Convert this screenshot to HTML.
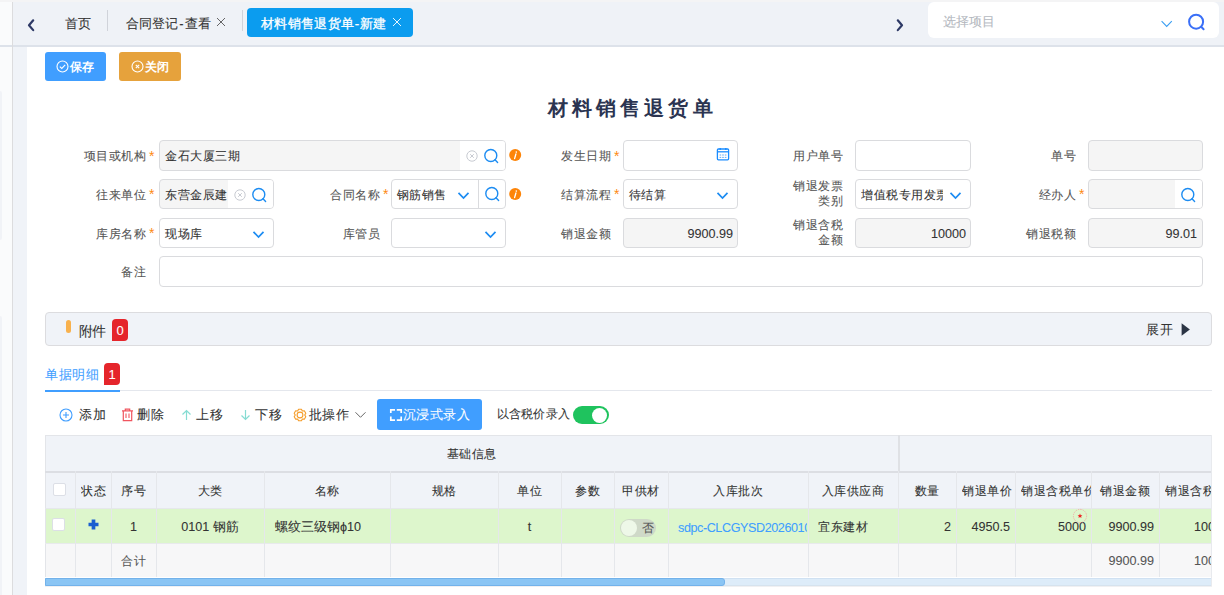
<!DOCTYPE html>
<html><head><meta charset="utf-8">
<style>
*{box-sizing:border-box;margin:0;padding:0}
html,body{width:1224px;height:595px;overflow:hidden;background:#fff;font-family:"Liberation Sans",sans-serif;color:#333;font-size:13px}
div,svg{position:absolute}
.t{white-space:nowrap;line-height:16px;-webkit-text-stroke:0.08px currentColor}
#topstrip{left:0;top:0;width:1224px;height:2px;background:#f4f4f5}
#leftbar{left:0;top:2px;width:12px;height:593px;background:#fafbfc}
#vline{left:12px;top:2px;width:1px;height:593px;background:#dcdcde}
#header{left:13px;top:2px;width:1211px;height:43px;background:#eff2f7}
#hline{left:0;top:45px;width:1224px;height:2px;background:#dde2ea}
#lstrip{left:13px;top:47px;width:14px;height:548px;background:#f0f3f8}
.tab{top:16px;font-size:13px;color:#333}
.sep{top:10px;width:1px;height:21px;background:#d0d3da}
.btn{top:52px;height:29px;border-radius:3px;color:#fff}
.lbl{font-size:12px;letter-spacing:0.5px;color:#555;text-align:right}
.req{color:#fd8a12;font-size:14px;-webkit-text-stroke:0}
.inp{height:30px;border:1px solid #dadbde;border-radius:4px;background:#fff;overflow:hidden}
.g{background:#f5f5f5}
.it{font-size:12px;letter-spacing:0.5px;color:#333}
.num{font-size:12.6px;color:#333}
.cell{font-size:12.6px;color:#333;text-align:center}
.tb{font-size:13px;letter-spacing:0.5px;color:#333}
.vl{width:1px;background:#e6e9ee}
</style></head><body>
<div id="topstrip"></div>
<div id="leftbar"></div>
<div style="left:0;top:91px;width:2px;height:149px;background:#f1f3f7;border-radius:0 2px 2px 0"></div>
<div style="left:0;top:316px;width:2px;height:279px;background:#f1f3f7;border-radius:0 2px 0 0"></div>
<div id="header"></div>
<div id="hline"></div>
<div id="vline"></div>
<div id="lstrip"></div>

<!-- header tabs -->
<svg style="left:26px;top:17px" width="10" height="16" viewBox="0 0 10 16"><path d="M7.2 3.3 L3 8.2 L7.2 13.1" fill="none" stroke="#2e3a66" stroke-width="2.2" stroke-linecap="round" stroke-linejoin="round"/></svg>
<div class="t tab" style="left:65px">首页</div>
<div class="sep" style="left:107px"></div>
<div class="t tab" style="left:126px">合同登记<span style="margin:0 1.2px">-</span>查看</div>
<svg style="left:216px;top:17px" width="10" height="10" viewBox="0 0 10 10"><path d="M1 1L9 9M9 1L1 9" stroke="#555" stroke-width="0.9"/></svg>
<div class="sep" style="left:242px"></div>
<div style="left:247px;top:8px;width:166px;height:29px;border-radius:4px;background:#0b9cef"></div>
<div class="t tab" style="left:261px;color:#fff;font-size:13.4px;top:15.5px;letter-spacing:0.35px;-webkit-text-stroke:0.3px #fff">材料销售退货单<span style="margin:0 0.3px">-</span>新建</div>
<svg style="left:392px;top:17px" width="10" height="10" viewBox="0 0 10 10"><path d="M1 1L9 9M9 1L1 9" stroke="#fff" stroke-width="0.9"/></svg>
<svg style="left:894.5px;top:17px" width="10" height="16" viewBox="0 0 10 16"><path d="M2.8 3.3 L7 8.2 L2.8 13.1" fill="none" stroke="#2e3a66" stroke-width="2.2" stroke-linecap="round" stroke-linejoin="round"/></svg>
<div style="left:928px;top:2px;width:291px;height:36px;border-radius:6px;background:#fff"></div>
<div class="t" style="left:943px;top:14px;font-size:12.6px;color:#b4b8c0">选择项目</div>
<svg style="left:1159px;top:18px" width="15" height="11" viewBox="0 0 15 11"><path d="M2.6 3.2L7.7 8.4L12.8 3.2" fill="none" stroke="#3a9ef2" stroke-width="1.1"/></svg>
<svg style="left:1186px;top:12px" width="20" height="20" viewBox="0 0 20 20"><circle cx="10.1" cy="9.7" r="7" fill="none" stroke="#3a6ff7" stroke-width="2"/><path d="M15.2 14.8L17.6 17.2" stroke="#3a6ff7" stroke-width="2" stroke-linecap="round"/></svg>

<!-- buttons -->
<div class="btn" style="left:45px;width:61px;background:#409eff"></div>
<svg style="left:56px;top:60px" width="13" height="13" viewBox="0 0 13 13"><circle cx="6.5" cy="6.5" r="5.5" fill="none" stroke="#fff" stroke-width="1.1"/><path d="M3.8 6.6L5.8 8.4L9.2 4.8" fill="none" stroke="#fff" stroke-width="1.1"/></svg>
<div class="t" style="left:70px;top:58.5px;font-size:12px;letter-spacing:0.1px;font-weight:bold;color:#fff;-webkit-text-stroke:0">保存</div>
<div class="btn" style="left:119px;width:62px;background:#e6a23c"></div>
<svg style="left:131px;top:60px" width="13" height="13" viewBox="0 0 13 13"><circle cx="6.5" cy="6.5" r="5.5" fill="none" stroke="#fff" stroke-width="1.1"/><path d="M4.8 4.8L8.2 8.2M8.2 4.8L4.8 8.2" fill="none" stroke="#fff" stroke-width="1.1"/></svg>
<div class="t" style="left:144.5px;top:58.5px;font-size:12px;letter-spacing:0.1px;font-weight:bold;color:#fff;-webkit-text-stroke:0">关闭</div>

<!-- title -->
<div class="t" style="left:548px;top:96px;font-size:20px;line-height:24px;font-weight:bold;color:#2b3451;letter-spacing:4.1px;-webkit-text-stroke:0">材料销售退货单</div>


<!-- row1 -->
<div class="inp g" style="left:159px;top:140px;width:347px;height:31px"><div style="left:300px;top:0;width:46px;height:29px;background:#fff"></div></div>
<div class="t it" style="left:165px;top:148px">金石大厦三期</div>
<svg class="clr" style="left:466px;top:150px" width="12" height="12" viewBox="0 0 12 12"><circle cx="6" cy="6" r="5.2" fill="none" stroke="#c8cbd2" stroke-width="1"/><path d="M4.2 4.2L7.8 7.8M7.8 4.2L4.2 7.8" stroke="#c8cbd2" stroke-width="1"/></svg>
<svg style="left:483px;top:148px" width="16" height="16" viewBox="0 0 16 16"><circle cx="7.8" cy="7.5" r="6" fill="none" stroke="#1c8cf2" stroke-width="1.4"/><path d="M12 11.8L14.6 14.4" stroke="#1c8cf2" stroke-width="1.4" stroke-linecap="round"/></svg>
<svg style="left:509px;top:149px" width="13" height="13" viewBox="0 0 13 13"><circle cx="6.2" cy="6.1" r="6" fill="#fd8408"/><circle cx="7.3" cy="3.1" r="0.8" fill="#fff"/><path d="M6.9 5L5.6 9.6" fill="none" stroke="#fff" stroke-width="1.3" stroke-linecap="round"/></svg>
<div class="inp" style="left:623px;top:140px;width:115px;height:31px"></div>
<svg style="left:715.5px;top:146.5px" width="14" height="14" viewBox="0 0 14 14"><rect x="1.4" y="2" width="11.2" height="10.8" rx="1" fill="none" stroke="#1a8cff" stroke-width="1.3"/><path d="M1.4 4.8H12.6" stroke="#1a8cff" stroke-width="1.3"/><path d="M4.2 0.9V2.9M9.8 0.9V2.9" stroke="#1a8cff" stroke-width="1.4"/><path d="M3.6 8H5.2M6.2 8H7.8M8.8 8H10.4M3.6 10.4H5.2M6.2 10.4H7.8M8.8 10.4H10.4" stroke="#4ea2f7" stroke-width="0.9"/></svg>
<div class="inp" style="left:855px;top:140px;width:116px;height:31px"></div>
<div class="inp g" style="left:1088px;top:140px;width:115px;height:31px"></div>
<!-- row2 -->
<div class="inp g" style="left:159px;top:179px;width:115px;height:30px"><div style="left:68px;top:0;width:46px;height:28px;background:#fff"></div></div>
<div style="left:165px;top:179px;width:62px;height:30px;overflow:hidden"><div class="t it" style="left:0;top:8px">东营金辰建设</div></div>
<svg class="clr" style="left:233.5px;top:188.5px" width="12" height="12" viewBox="0 0 12 12"><circle cx="6" cy="6" r="5.2" fill="none" stroke="#c8cbd2" stroke-width="1"/><path d="M4.2 4.2L7.8 7.8M7.8 4.2L4.2 7.8" stroke="#c8cbd2" stroke-width="1"/></svg>
<svg style="left:251px;top:187px" width="16" height="16" viewBox="0 0 16 16"><circle cx="7.8" cy="7.5" r="6" fill="none" stroke="#1c8cf2" stroke-width="1.4"/><path d="M12 11.8L14.6 14.4" stroke="#1c8cf2" stroke-width="1.4" stroke-linecap="round"/></svg>
<div class="inp" style="left:391px;top:179px;width:115px;height:30px"><div style="left:86px;top:0;width:1px;height:28px;background:#dadbde"></div></div>
<div class="t it" style="left:396.5px;top:187px">钢筋销售</div>
<svg class="chev" style="left:457px;top:191px" width="13" height="9" viewBox="0 0 13 9"><path d="M1.5 1.8L6.5 7L11.5 1.8" fill="none" stroke="#1c8cf2" stroke-width="1.7"/></svg>
<svg style="left:484px;top:186px" width="16" height="16" viewBox="0 0 16 16"><circle cx="7.8" cy="7.5" r="6" fill="none" stroke="#1c8cf2" stroke-width="1.4"/><path d="M12 11.8L14.6 14.4" stroke="#1c8cf2" stroke-width="1.4" stroke-linecap="round"/></svg>
<svg style="left:509px;top:188px" width="13" height="13" viewBox="0 0 13 13"><circle cx="6.2" cy="6.1" r="6" fill="#fd8408"/><circle cx="7.3" cy="3.1" r="0.8" fill="#fff"/><path d="M6.9 5L5.6 9.6" fill="none" stroke="#fff" stroke-width="1.3" stroke-linecap="round"/></svg>
<div class="inp" style="left:623px;top:179px;width:115px;height:30px"></div>
<div class="t it" style="left:628.5px;top:187px">待结算</div>
<svg class="chev" style="left:716px;top:191px" width="13" height="9" viewBox="0 0 13 9"><path d="M1.5 1.8L6.5 7L11.5 1.8" fill="none" stroke="#1c8cf2" stroke-width="1.7"/></svg>
<div class="inp" style="left:855px;top:179px;width:116px;height:30px"></div>
<div style="left:861px;top:179px;width:82px;height:30px;overflow:hidden"><div class="t it" style="left:0;top:8px">增值税专用发票</div></div>
<svg class="chev" style="left:949px;top:191px" width="13" height="9" viewBox="0 0 13 9"><path d="M1.5 1.8L6.5 7L11.5 1.8" fill="none" stroke="#1c8cf2" stroke-width="1.7"/></svg>
<div class="inp g" style="left:1088px;top:179px;width:115px;height:30px"><div style="left:86px;top:0;width:28px;height:28px;background:#fff"></div></div>
<svg style="left:1180px;top:187px" width="16" height="16" viewBox="0 0 16 16"><circle cx="7.8" cy="7.5" r="6" fill="none" stroke="#1c8cf2" stroke-width="1.4"/><path d="M12 11.8L14.6 14.4" stroke="#1c8cf2" stroke-width="1.4" stroke-linecap="round"/></svg>
<!-- row3 -->
<div class="inp" style="left:159px;top:218px;width:115px;height:30px"></div>
<div class="t it" style="left:165px;top:226px">现场库</div>
<svg class="chev" style="left:252px;top:230px" width="13" height="9" viewBox="0 0 13 9"><path d="M1.5 1.8L6.5 7L11.5 1.8" fill="none" stroke="#1c8cf2" stroke-width="1.7"/></svg>
<div class="inp" style="left:391px;top:218px;width:115px;height:30px"></div>
<svg class="chev" style="left:484px;top:230px" width="13" height="9" viewBox="0 0 13 9"><path d="M1.5 1.8L6.5 7L11.5 1.8" fill="none" stroke="#1c8cf2" stroke-width="1.7"/></svg>
<div class="inp g" style="left:623px;top:218px;width:115px;height:30px"></div>
<div class="t num" style="left:623px;width:110px;text-align:right;top:226px">9900.99</div>
<div class="inp g" style="left:855px;top:218px;width:116px;height:30px"></div>
<div class="t num" style="left:855px;width:111px;text-align:right;top:226px">10000</div>
<div class="inp g" style="left:1088px;top:218px;width:115px;height:30px"></div>
<div class="t num" style="left:1088px;width:109px;text-align:right;top:226px">99.01</div>
<!-- row4 -->
<div class="inp" style="left:159px;top:256px;width:1044px;height:31px"></div>

<div class="t lbl" style="left:46px;width:100px;top:148.0px">项目或机构</div>
<div class="t req" style="left:149px;top:147.5px">*</div>
<div class="t lbl" style="left:46px;width:100px;top:186.5px">往来单位</div>
<div class="t req" style="left:149px;top:186.0px">*</div>
<div class="t lbl" style="left:46px;width:100px;top:225.5px">库房名称</div>
<div class="t req" style="left:149px;top:225.0px">*</div>
<div class="t lbl" style="left:46px;width:100px;top:263.5px">备注</div>
<div class="t lbl" style="left:280px;width:100px;top:186.5px">合同名称</div>
<div class="t req" style="left:383px;top:186.0px">*</div>
<div class="t lbl" style="left:280px;width:100px;top:225.5px">库管员</div>
<div class="t lbl" style="left:511px;width:100px;top:148.0px">发生日期</div>
<div class="t req" style="left:614px;top:147.5px">*</div>
<div class="t lbl" style="left:511px;width:100px;top:186.5px">结算流程</div>
<div class="t req" style="left:614px;top:186.0px">*</div>
<div class="t lbl" style="left:511px;width:100px;top:225.5px">销退金额</div>
<div class="t lbl" style="left:743px;width:100px;top:148.0px">用户单号</div>
<div class="t lbl" style="left:743px;width:100px;top:179.0px;line-height:15px">销退发票<br>类别</div>
<div class="t lbl" style="left:743px;width:100px;top:218.0px;line-height:15px">销退含税<br>金额</div>
<div class="t lbl" style="left:976px;width:100px;top:148.0px">单号</div>
<div class="t lbl" style="left:976px;width:100px;top:186.5px">经办人</div>
<div class="t req" style="left:1079px;top:186.0px">*</div>
<div class="t lbl" style="left:976px;width:100px;top:225.5px">销退税额</div>
<div style="left:45px;top:312px;width:1167px;height:34px;background:#f0f3f8;border:1px solid #dcdcdf;border-radius:4px"></div>
<div style="left:66px;top:320px;width:5px;height:13px;background:#f8b14d;border-radius:3px"></div>
<div class="t" style="left:78.5px;top:323px;font-size:14px;letter-spacing:-0.3px;color:#333">附件</div>
<div style="left:112px;top:319px;width:16px;height:22px;background:#e5252b;border-radius:4px 4px 4px 0"></div>
<div class="t" style="left:112px;top:323px;width:16px;text-align:center;font-size:13px;color:#fff">0</div>
<div class="t" style="left:1146px;top:322px;font-size:13px;letter-spacing:0.5px;color:#333">展开</div>
<svg style="left:1180px;top:322px" width="11" height="15" viewBox="0 0 11 15"><path d="M1.6 1.2L9.9 7.5L1.6 13.7Z" fill="#2b3444"/></svg>
<div class="t" style="left:45px;top:366.5px;font-size:13px;letter-spacing:0.5px;color:#409eff">单据明细</div>
<div style="left:104px;top:363px;width:16px;height:22px;background:#e5252b;border-radius:4px 4px 4px 0"></div>
<div class="t" style="left:104px;top:367px;width:16px;text-align:center;font-size:13px;color:#fff">1</div>
<div style="left:45px;top:390px;width:1167px;height:1px;background:#e4e7ed"></div>
<div style="left:45px;top:390px;width:75px;height:1.5px;background:#409eff"></div>
<svg style="left:59px;top:408px" width="14" height="14" viewBox="0 0 14 14"><circle cx="7" cy="7" r="6" fill="none" stroke="#409eff" stroke-width="1.1"/><path d="M7 4V10M4 7H10" stroke="#409eff" stroke-width="1.1"/></svg>
<div class="t tb" style="left:79px;top:407px">添加</div>
<svg style="left:121px;top:408px" width="13" height="14" viewBox="0 0 13 14"><path d="M1 2.8H12M4.3 2.5V1.2H8.7V2.5M2.3 3V12.6H10.7V3" fill="none" stroke="#f0555f" stroke-width="1.2"/><path d="M5 5.5V10M8 5.5V10" stroke="#f0555f" stroke-width="1.1"/></svg>
<div class="t tb" style="left:137px;top:407px">删除</div>
<svg style="left:181px;top:409px" width="11" height="12" viewBox="0 0 11 12"><path d="M5.5 11V1.5M1.5 5.5L5.5 1.5L9.5 5.5" fill="none" stroke="#86dcd3" stroke-width="1.2"/></svg>
<div class="t tb" style="left:196px;top:407px">上移</div>
<svg style="left:239.5px;top:408.5px" width="11" height="12" viewBox="0 0 11 12"><path d="M5.5 1V10.5M1.5 6.5L5.5 10.5L9.5 6.5" fill="none" stroke="#86dcd3" stroke-width="1.2"/></svg>
<div class="t tb" style="left:255px;top:407px">下移</div>
<svg style="left:292.5px;top:407.8px" width="14" height="14" viewBox="0 0 14 14"><circle cx="7" cy="7" r="2.9" fill="none" stroke="#f59d2a" stroke-width="1.1"/><path d="M4.65 2.93 L5.55 1.18 L8.45 1.18 L9.35 2.93 L11.32 2.83 L12.77 5.35 L11.70 7.00 L12.77 8.65 L11.32 11.17 L9.35 11.07 L8.45 12.82 L5.55 12.82 L4.65 11.07 L2.68 11.17 L1.23 8.65 L2.30 7.00 L1.23 5.35 L2.68 2.83Z" fill="none" stroke="#f59d2a" stroke-width="1.1" stroke-linejoin="round"/></svg>
<div class="t tb" style="left:308.5px;top:407px">批操作</div>
<svg style="left:354px;top:410px" width="13" height="9" viewBox="0 0 13 9"><path d="M1.5 2.3L6.5 7.3L11.5 2.3" fill="none" stroke="#666" stroke-width="1"/></svg>
<div style="left:377px;top:399px;width:105px;height:31px;background:#409eff;border-radius:3px"></div>
<svg style="left:389px;top:408px" width="14" height="14" viewBox="0 0 14 14"><path d="M1.8 5V1.8H6M7.8 1.8H12.2V5M1.8 8.5V12.1H6M7.8 12.1H12.2V8.5" fill="none" stroke="#fff" stroke-width="1.7"/></svg>
<div class="t" style="left:402.5px;top:407px;font-size:13px;letter-spacing:0.5px;color:#fff">沉浸式录入</div>
<div class="t" style="left:496.5px;top:406px;font-size:12px;letter-spacing:0.3px;color:#333">以含税价录入</div>
<div style="left:572.5px;top:406px;width:36px;height:18px;background:#1fc35e;border-radius:9px"></div>
<div style="left:592px;top:407.5px;width:15px;height:15px;background:#fff;border-radius:50%"></div>
<div style="left:45px;top:435px;width:1167px;height:160px;overflow:hidden">
<div style="left:0px;top:0px;width:1300px;height:73px;background:#f0f3f8"></div>
<div style="left:0px;top:73px;width:1300px;height:35px;background:#ddf6cc"></div>
<div style="left:0px;top:108px;width:1300px;height:34px;background:#f7f7f8"></div>
<div style="left:0px;top:0px;width:1300px;height:1px;background:#e3e5e9"></div>
<div style="left:0px;top:0px;width:1px;height:151px;background:#e3e5e9"></div>
<div style="left:0px;top:36px;width:1300px;height:1.5px;background:#dcdee3"></div>
<div style="left:0px;top:73px;width:1300px;height:1px;background:#e6e8ec"></div>
<div style="left:0px;top:108px;width:1300px;height:1px;background:#e8eaec"></div>
<div style="left:0px;top:142px;width:1300px;height:1px;background:#fff"></div>
<div style="left:853px;top:0px;width:1.5px;height:36px;background:#dfe1e5"></div>
<div style="left:30px;top:36px;width:1px;height:106px;background:#e5e7eb"></div>
<div style="left:66px;top:36px;width:1px;height:106px;background:#e5e7eb"></div>
<div style="left:111px;top:36px;width:1px;height:106px;background:#e5e7eb"></div>
<div style="left:219px;top:36px;width:1px;height:106px;background:#e5e7eb"></div>
<div style="left:345px;top:36px;width:1px;height:106px;background:#e5e7eb"></div>
<div style="left:453px;top:36px;width:1px;height:106px;background:#e5e7eb"></div>
<div style="left:516px;top:36px;width:1px;height:106px;background:#e5e7eb"></div>
<div style="left:569px;top:36px;width:1px;height:106px;background:#e5e7eb"></div>
<div style="left:623px;top:36px;width:1px;height:106px;background:#e5e7eb"></div>
<div style="left:763px;top:36px;width:1px;height:106px;background:#e5e7eb"></div>
<div style="left:853px;top:36px;width:1px;height:106px;background:#e5e7eb"></div>
<div style="left:911px;top:36px;width:1px;height:106px;background:#e5e7eb"></div>
<div style="left:970px;top:36px;width:1px;height:106px;background:#e5e7eb"></div>
<div style="left:1046px;top:36px;width:1px;height:106px;background:#e5e7eb"></div>
<div style="left:1114px;top:36px;width:1px;height:106px;background:#e5e7eb"></div>
<div class="t" style="left:0px;top:11px;width:853px;text-align:center;font-size:12px;letter-spacing:0.5px;color:#333">基础信息</div>
<div style="left:36px;top:48px;width:30px;height:18px;overflow:hidden"><div class="t" style="left:0;top:0;font-size:12px;letter-spacing:0.5px;color:#333">状态</div></div>
<div class="t" style="left:66px;top:48px;width:45px;text-align:center;font-size:12px;letter-spacing:0.5px;color:#333;overflow:hidden">序号</div>
<div class="t" style="left:111px;top:48px;width:108px;text-align:center;font-size:12px;letter-spacing:0.5px;color:#333;overflow:hidden">大类</div>
<div class="t" style="left:219px;top:48px;width:126px;text-align:center;font-size:12px;letter-spacing:0.5px;color:#333;overflow:hidden">名称</div>
<div class="t" style="left:345px;top:48px;width:108px;text-align:center;font-size:12px;letter-spacing:0.5px;color:#333;overflow:hidden">规格</div>
<div class="t" style="left:453px;top:48px;width:63px;text-align:center;font-size:12px;letter-spacing:0.5px;color:#333;overflow:hidden">单位</div>
<div class="t" style="left:516px;top:48px;width:53px;text-align:center;font-size:12px;letter-spacing:0.5px;color:#333;overflow:hidden">参数</div>
<div class="t" style="left:569px;top:48px;width:54px;text-align:center;font-size:12px;letter-spacing:0.5px;color:#333;overflow:hidden">甲供材</div>
<div class="t" style="left:623px;top:48px;width:140px;text-align:center;font-size:12px;letter-spacing:0.5px;color:#333;overflow:hidden">入库批次</div>
<div class="t" style="left:763px;top:48px;width:90px;text-align:center;font-size:12px;letter-spacing:0.5px;color:#333;overflow:hidden">入库供应商</div>
<div class="t" style="left:853px;top:48px;width:58px;text-align:center;font-size:12px;letter-spacing:0.5px;color:#333;overflow:hidden">数量</div>
<div style="left:917px;top:48px;width:53px;height:18px;overflow:hidden"><div class="t" style="left:0;top:0;font-size:12px;letter-spacing:0.5px;color:#333">销退单价</div></div>
<div style="left:976px;top:48px;width:70px;height:18px;overflow:hidden"><div class="t" style="left:0;top:0;font-size:12px;letter-spacing:0.5px;color:#333">销退含税单价</div></div>
<div class="t" style="left:1046px;top:48px;width:68px;text-align:center;font-size:12px;letter-spacing:0.5px;color:#333;overflow:hidden">销退金额</div>
<div style="left:1120px;top:48px;width:95px;height:18px;overflow:hidden"><div class="t" style="left:0;top:0;font-size:12px;letter-spacing:0.5px;color:#333">销退含税金额</div></div>
<div style="left:8px;top:48px;width:13px;height:13px;background:#fff;border:1px solid #dcdfe6;border-radius:2px"></div>
<div style="left:7px;top:83px;width:13px;height:13px;background:#fff;border:1px solid #dcdfe6;border-radius:2px"></div>
<svg style="left:43px;top:83.5px" width="11" height="11" viewBox="0 0 11 11"><path d="M5.5 0.5V10.5M0.5 5.5H10.5" stroke="#1a5fd0" stroke-width="3.7"/></svg>
<div class="t" style="left:66px;top:84px;width:45px;text-align:center;font-size:12.6px;color:#333">1</div>
<div class="t" style="left:111px;top:84px;width:108px;text-align:center;font-size:12.6px;color:#333">0101 钢筋</div>
<div class="t" style="left:230px;top:84px;width:120px;text-align:left;font-size:12.6px;color:#333">螺纹三级钢ϕ10</div>
<div class="t" style="left:453px;top:84px;width:63px;text-align:center;font-size:12.6px;color:#333">t</div>
<div style="left:575px;top:84px;width:36px;height:18px;background:#cfd9c8;border-radius:9px"></div>
<div style="left:576px;top:85px;width:16px;height:16px;background:#eef8e8;border-radius:50%"></div>
<div class="t" style="left:597px;top:85px;width:20px;text-align:left;font-size:12px;color:#555">否</div>
<div style="left:633px;top:84px;width:129px;height:20px;overflow:hidden"><div class="t" style="left:0;top:0.5px;font-size:12.6px;letter-spacing:-0.42px;color:#409eff">sdpc-CLCGYSD2026010013</div></div>
<div class="t" style="left:773px;top:84px;width:100px;text-align:left;font-size:12px;letter-spacing:0.5px;color:#333">宜东建材</div>
<div class="t" style="left:853px;top:84px;width:53px;text-align:right;font-size:12.6px;color:#333">2</div>
<div class="t" style="left:911px;top:84px;width:54px;text-align:right;font-size:12.6px;color:#333">4950.5</div>
<div class="t" style="left:970px;top:84px;width:71px;text-align:right;font-size:12.6px;color:#333">5000</div>
<div class="t" style="left:1046px;top:84px;width:63px;text-align:right;font-size:12.6px;color:#333">9900.99</div>
<div class="t" style="left:1149px;top:84px;width:80px;text-align:left;font-size:12.6px;color:#333">10000</div>
<svg style="left:1027px;top:72.5px" width="16" height="16" viewBox="0 0 16 16"><circle cx="8" cy="8" r="6.6" fill="none" stroke="#f3a3a3" stroke-width="0.9" stroke-dasharray="1.3 1.1"/><path d="M8 5.6L8.7 7.2L10.4 7.3L9.1 8.4L9.5 10L8 9.1L6.5 10L6.9 8.4L5.6 7.3L7.3 7.2Z" fill="#ee2020"/></svg>
<div class="t" style="left:66px;top:118px;width:45px;text-align:center;font-size:12px;letter-spacing:0.5px;color:#555">合计</div>
<div class="t" style="left:1046px;top:118px;width:63px;text-align:right;font-size:12.6px;color:#555">9900.99</div>
<div class="t" style="left:1149px;top:118px;width:80px;text-align:left;font-size:12.6px;color:#555">10000</div>
<div style="left:0px;top:143px;width:1300px;height:8px;background:#ddecf9;border-top:1px solid #d0e1f2;border-bottom:1px solid #d6e3ee"></div>
<div style="left:0px;top:143px;width:680px;height:8px;background:#8ac5f4;border:1px solid #73b2ea;border-radius:0 3px 3px 0"></div>
<div style="left:0px;top:151px;width:1300px;height:1px;background:#f0f0f2"></div>
</div>
<div style="left:1211px;top:435px;width:1px;height:151px;background:#e8eaee"></div>

</body></html>
